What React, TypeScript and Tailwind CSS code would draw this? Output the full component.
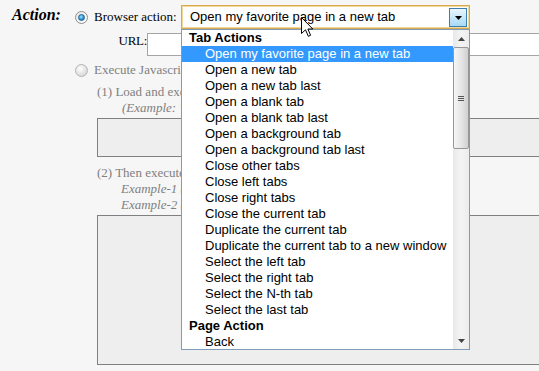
import React from "react";

const groups: { label: string; items: string[] }[] = [
  {
    label: "Tab Actions",
    items: [
      "Open my favorite page in a new tab",
      "Open a new tab",
      "Open a new tab last",
      "Open a blank tab",
      "Open a blank tab last",
      "Open a background tab",
      "Open a background tab last",
      "Close other tabs",
      "Close left tabs",
      "Close right tabs",
      "Close the current tab",
      "Duplicate the current tab",
      "Duplicate the current tab to a new window",
      "Select the left tab",
      "Select the right tab",
      "Select the N-th tab",
      "Select the last tab",
    ],
  },
  { label: "Page Action", items: ["Back"] },
];

function RadioChecked() {
  return (
    <div className="w-[13px] h-[13px] rounded-full border border-[#8f8f8f] bg-gradient-to-br from-[#e8e8e8] to-[#ffffff] flex items-center justify-center shrink-0">
      <div className="w-[7px] h-[7px] rounded-full bg-[radial-gradient(circle_at_40%_35%,#9ee2ff_0%,#2a9ce0_55%,#15609c_100%)] border border-[#1d5f8f]" />
    </div>
  );
}

function RadioDisabled() {
  return (
    <div className="w-[13px] h-[13px] rounded-full border border-[#b5b5b5] bg-[radial-gradient(circle_at_40%_35%,#ffffff_0%,#e0e0e0_60%,#c8c8c8_100%)] shrink-0" />
  );
}

export default function App() {
  return (
    <div
      className="relative w-[539px] h-[371px] overflow-hidden bg-[#f6f6f6] text-[13px] text-black"
      style={{ fontFamily: '"Liberation Serif", "Times New Roman", serif' }}
    >
      <div className="flex pt-[5px]">
        <div className="w-[75px] pl-[12px] shrink-0 text-[16px] font-bold italic leading-[18px] pt-[1px]">
          Action:
        </div>
        <div className="flex flex-col flex-1 min-w-0">
          {/* Row 1 */}
          <div className="flex items-center h-[24px]">
            <RadioChecked />
            <div className="w-[93px] pl-[6px] whitespace-nowrap leading-[16px] shrink-0">Browser action:</div>
            <div
              className="relative w-[289px] h-[24px] border border-[#d9a94f] bg-white shrink-0 flex items-center"
              style={{ fontFamily: '"Liberation Sans", Arial, sans-serif' }}
            >
              <div className="absolute inset-0 border border-[#f3d89c]" />
              <span className="pl-[8px] whitespace-nowrap leading-[16px]">Open my favorite page in a new tab</span>
              <div className="absolute right-[2px] top-[2px] w-[18px] h-[19px] border border-[#3c7fb1] bg-gradient-to-b from-[#eaf6fd] to-[#a7d9f5] flex items-center justify-center">
                <svg width="7" height="4" viewBox="0 0 7 4">
                  <path d="M0 0 H7 L3.5 4 Z" fill="#000" />
                </svg>
              </div>
            </div>
          </div>
          {/* Row 2 */}
          <div className="flex mt-[4px] h-[23px] pl-[42px]">
            <div className="w-[30px] flex justify-end leading-[16px] shrink-0 whitespace-nowrap tracking-[-0.3px]">URL:</div>
            <div className="w-[420px] h-[23px] bg-white border border-[#a5a5a5] shrink-0" />
          </div>
          {/* Row 3 */}
          <div className="flex items-center mt-[6px] h-[16px] text-[#808080]">
            <RadioDisabled />
            <div className="pl-[6px] whitespace-nowrap leading-[16px]">Execute Javascript:</div>
          </div>
          <div className="mt-[6px] pl-[22px] leading-[16px] text-[#808080] whitespace-nowrap">
            (1) Load and execute a script file:
          </div>
          <div className="pl-[47px] leading-[16px] text-[#808080] italic whitespace-nowrap">
            (Example: "http://code.jquery.com")
          </div>
          <div className="mt-[2px] ml-[22px] w-[460px] h-[39px] bg-[#eeeeee] border border-[#808080] shrink-0" />
          <div className="mt-[8px] pl-[22px] leading-[16px] text-[#808080] whitespace-nowrap">
            (2) Then execute the code:
          </div>
          <div className="pl-[46px] leading-[16px] text-[#808080] italic whitespace-nowrap">
            Example-1 (JavaScript): alert(1)
          </div>
          <div className="pl-[46px] leading-[16px] text-[#808080] italic whitespace-nowrap">
            Example-2 (jQuery): $("a")
          </div>
          <div className="mt-[2px] ml-[22px] w-[460px] h-[150px] bg-[#eeeeee] border border-[#808080] shrink-0" />
        </div>
      </div>

      {/* Dropdown list */}
      <div
        className="absolute left-[181px] top-[29px] w-[289px] h-[321px] bg-white border border-[#7f9db9] flex overflow-hidden"
        style={{ fontFamily: '"Liberation Sans", Arial, sans-serif' }}
      >
        <div className="flex-1 min-w-0 overflow-hidden">
          {groups.map((g) => (
            <div key={g.label}>
              <div className="h-[16px] leading-[16px] pl-[7px] font-bold whitespace-nowrap">{g.label}</div>
              {g.items.map((it, i) => (
                <div
                  key={it}
                  className={
                    g.label === "Tab Actions" && i === 0
                      ? "h-[16px] leading-[16px] pl-[23px] whitespace-nowrap bg-[#3399ff] text-white"
                      : "h-[16px] leading-[16px] pl-[23px] whitespace-nowrap text-[#000000]"
                  }
                >
                  {it}
                </div>
              ))}
            </div>
          ))}
        </div>
        {/* Scrollbar */}
        <div className="w-[16px] shrink-0 h-full bg-gradient-to-r from-[#e8e8e8] via-[#f4f4f4] to-[#ececec] flex flex-col">
          <div className="h-[17px] flex items-center justify-center shrink-0">
            <svg width="7" height="4" viewBox="0 0 7 4">
              <path d="M3.5 0 L7 4 H0 Z" fill="#444" />
            </svg>
          </div>
          <div className="h-[102px] rounded-[2px] border border-[#979797] bg-gradient-to-r from-[#f5f5f5] via-[#e6e6e6] to-[#d0d0d0] flex flex-col items-center justify-center gap-[1px] shrink-0">
            <div className="w-[6px] h-[1px] bg-[#555]" />
            <div className="w-[6px] h-[1px] bg-[#555]" />
            <div className="w-[6px] h-[1px] bg-[#555]" />
          </div>
          <div className="flex-1" />
          <div className="h-[17px] flex items-center justify-center shrink-0">
            <svg width="7" height="4" viewBox="0 0 7 4">
              <path d="M0 0 H7 L3.5 4 Z" fill="#444" />
            </svg>
          </div>
        </div>
      </div>

      {/* Mouse cursor */}
      <svg className="absolute left-[301px] top-[17px]" width="13" height="21" viewBox="0 0 13 21">
        <path
          d="M0.5 0.5 L0.5 16.5 L4.5 12.8 L7.3 19.3 L9.6 18.3 L6.9 12 L11.8 12 Z"
          fill="#fff"
          stroke="#000"
          strokeWidth="1"
          strokeLinejoin="miter"
        />
      </svg>
    </div>
  );
}
